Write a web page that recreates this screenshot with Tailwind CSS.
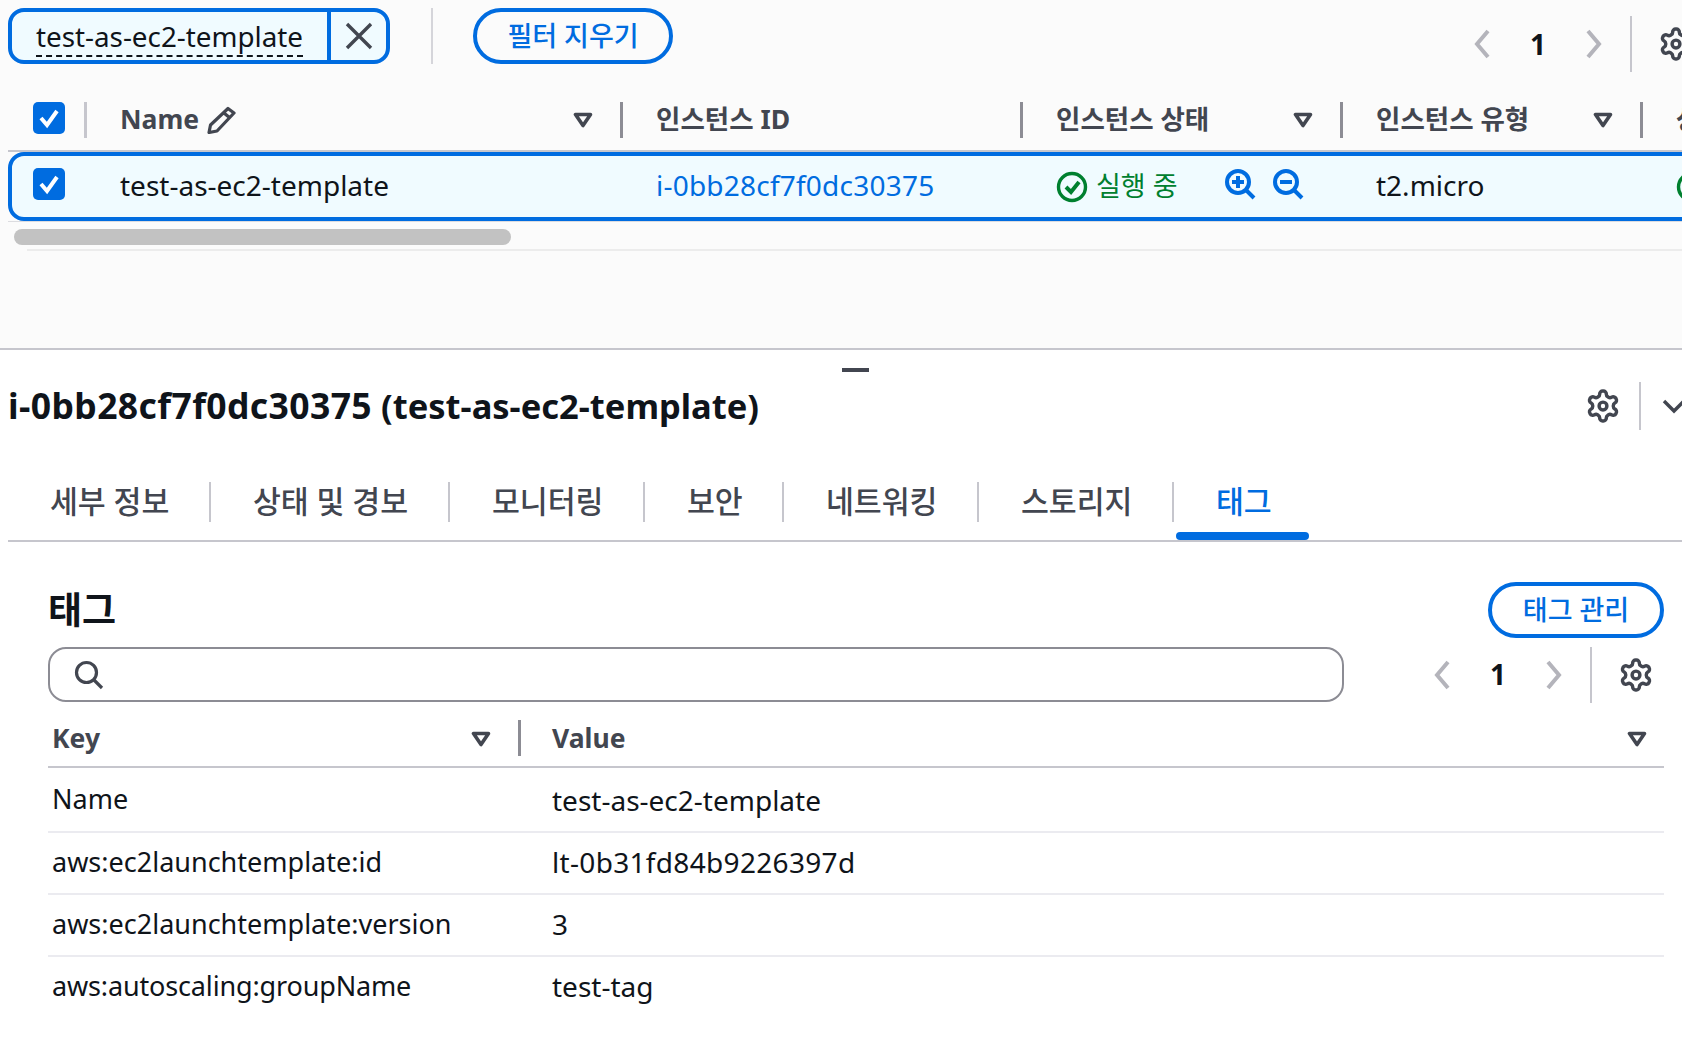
<!DOCTYPE html>
<html lang="ko">
<head>
  <meta charset="UTF-8" />
  <title>EC2 인스턴스</title>
  <script src="https://cdn.jsdelivr.net/npm/@tailwindcss/browser@4"></script>
</head>
<body class="bg-white w-[1682px] h-[1042px] overflow-hidden font-['Noto_Sans','Noto_Sans_CJK_KR',sans-serif] text-[28px] text-[#0f141a]">

  <!-- shared icons -->
  <svg class="hidden">
    <symbol id="gear" viewBox="0 0 24 24"><path fill="none" stroke="currentColor" stroke-width="2.3" stroke-linejoin="round" d="M12.22 2h-.44a2 2 0 0 0-2 2v.18a2 2 0 0 1-1 1.73l-.43.25a2 2 0 0 1-2 0l-.15-.08a2 2 0 0 0-2.73.73l-.22.38a2 2 0 0 0 .73 2.73l.15.1a2 2 0 0 1 1 1.72v.51a2 2 0 0 1-1 1.74l-.15.09a2 2 0 0 0-.73 2.73l.22.38a2 2 0 0 0 2.73.73l.15-.08a2 2 0 0 1 2 0l.43.25a2 2 0 0 1 1 1.73V20a2 2 0 0 0 2 2h.44a2 2 0 0 0 2-2v-.18a2 2 0 0 1 1-1.73l.43-.25a2 2 0 0 1 2 0l.15.08a2 2 0 0 0 2.73-.73l.22-.39a2 2 0 0 0-.73-2.73l-.15-.08a2 2 0 0 1-1-1.74v-.5a2 2 0 0 1 1-1.74l.15-.09a2 2 0 0 0 .73-2.73l-.22-.38a2 2 0 0 0-2.73-.73l-.15.08a2 2 0 0 1-2 0l-.43-.25a2 2 0 0 1-1-1.73V4a2 2 0 0 0-2-2z"/><circle cx="12" cy="12" r="2.6" fill="none" stroke="currentColor" stroke-width="2.3"/></symbol>
    <symbol id="caret" viewBox="0 0 20 16"><path fill="none" stroke="currentColor" stroke-width="3.6" stroke-linejoin="round" d="M2.5 2.5h15L10 13.5z"/></symbol>
    <symbol id="prev" viewBox="0 0 16 30"><path fill="none" stroke="currentColor" stroke-width="4" stroke-linejoin="miter" d="M14 2 3 15l11 13"/></symbol>
    <symbol id="next" viewBox="0 0 16 30"><path fill="none" stroke="currentColor" stroke-width="4" stroke-linejoin="miter" d="m2 2 11 13L2 28"/></symbol>
    <symbol id="check" viewBox="0 0 32 32"><rect width="32" height="32" rx="5" fill="#006ce0"/><path fill="none" stroke="#fff" stroke-width="4" d="m8 16 6 7 10-14"/></symbol>
  </svg>

  <!-- 인스턴스 목록 -->
  <section class="h-[350px] bg-[#fbfbfb] border-b-2 border-[#c6c6cd] overflow-hidden pt-2">
    <div class="flex items-start h-[55px] pl-2">
      <div class="flex w-[382px] h-[56px] border-4 border-[#006ce0] rounded-2xl bg-[#f0fbff] overflow-hidden">
        <div class="w-[315px] pl-[24px] pt-[3px]">
          <span class="inline-block text-[27.8px] leading-[37px] border-b-2 border-dashed border-[#0f141a]">test-as-ec2-template</span>
        </div>
        <div class="flex-1 border-l-4 border-[#006ce0] flex items-center justify-center">
          <svg class="w-[28px] h-[28px] text-[#424650]" viewBox="0 0 28 28"><path fill="none" stroke="currentColor" stroke-width="3.4" d="m2 2 24 24M26 2 2 26"/></svg>
        </div>
      </div>
      <div class="ml-[41px] w-0.5 h-[56px] bg-[#d5d5da]"></div>
      <button class="ml-[40px] w-[200px] h-[56px] border-4 border-[#006ce0] rounded-full text-[27px] text-[#006ce0] font-medium">필터 지우기</button>
      <div class="ml-auto -mr-[12px] flex items-center h-[56px] mt-2 text-[#b4b4bb]">
        <svg class="w-4 h-[30px]"><use href="#prev"/></svg>
        <span class="ml-[40px] w-[29px] font-bold text-[#0f141a]">1</span>
        <svg class="ml-[27px] w-4 h-[30px]"><use href="#next"/></svg>
        <div class="ml-[28px] w-0.5 h-[56px] bg-[#c6c6cd]"></div>
        <svg class="ml-[26px] w-9 h-9 text-[#424650]"><use href="#gear"/></svg>
      </div>
    </div>

    <!-- 헤더 -->
    <div class="ml-2 mt-[39px] w-[1800px] pb-3 border-b-2 border-[#c6c6cd] grid grid-cols-[76px_536px_400px_320px_300px_168px] h-[50px] text-[26.5px] font-bold text-[#424650]">
      <div class="flex items-start h-[36px]">
        <svg class="ml-[25px] w-8 h-8"><use href="#check"/></svg>
      </div>
      <div class="flex items-center h-[36px] border-l-[3px] border-[#c6c6cd] pl-[33px] pr-[27px]">
        <span>Name</span>
        <svg class="ml-[7px] w-[30px] h-7" viewBox="0 0 30 28"><path fill="none" stroke="currentColor" stroke-width="3.2" stroke-linejoin="round" d="M22 2.5 28 7 11 25l-8 1.500L4.500 19zM18 7l6 5"/></svg>
        <svg class="ml-auto w-5 h-4"><use href="#caret"/></svg>
      </div>
      <div class="flex items-center h-[36px] border-l-[3px] border-[#8c8c94] pl-[33px]">인스턴스 ID</div>
      <div class="flex items-center h-[36px] border-l-[3px] border-[#8c8c94] pl-[33px] pr-[27px]">
        <span>인스턴스 상태</span>
        <svg class="ml-auto w-5 h-4"><use href="#caret"/></svg>
      </div>
      <div class="flex items-center h-[36px] border-l-[3px] border-[#8c8c94] pl-[33px] pr-[27px]">
        <span>인스턴스 유형</span>
        <svg class="ml-auto w-5 h-4"><use href="#caret"/></svg>
      </div>
      <div class="flex items-center h-[36px] border-l-[3px] border-[#8c8c94] pl-[33px]">상태 검사</div>
    </div>

    <!-- 선택된 행 -->
    <div class="ml-2 w-[1800px] h-[69px] border-4 border-[#006ce0] rounded-2xl bg-[#f0fbff] grid grid-cols-[72px_536px_400px_320px_300px_168px] items-center">
      <svg class="ml-[21px] -mt-[5px] w-8 h-8"><use href="#check"/></svg>
      <div class="pl-[36px] pb-1">test-as-ec2-template</div>
      <div class="pl-[36px] pb-1 text-[#006ce0] tracking-[0.22px]">i-0bb28cf7f0dc30375</div>
      <div class="pl-[36px] flex items-center text-[#00802f]">
        <svg class="w-8 h-8" viewBox="0 0 32 32"><circle cx="16" cy="16" r="13.5" fill="none" stroke="currentColor" stroke-width="3.4"/><path fill="none" stroke="currentColor" stroke-width="4" d="m10 16 5 5 8-10"/></svg>
        <span class="ml-2 w-[128px] text-[27px]">실행 중</span>
        <svg class="w-8 h-8 -mt-1.5 text-[#006ce0]" viewBox="0 0 32 32"><circle cx="14" cy="14" r="11" fill="none" stroke="currentColor" stroke-width="4"/><path fill="none" stroke="currentColor" stroke-width="4" d="m22 22 8 8M8 14h12M14 8v12"/></svg>
        <svg class="ml-4 w-8 h-8 -mt-1.5 text-[#006ce0]" viewBox="0 0 32 32"><circle cx="14" cy="14" r="11" fill="none" stroke="currentColor" stroke-width="4"/><path fill="none" stroke="currentColor" stroke-width="4" d="m22 22 8 8M8 14h12"/></svg>
      </div>
      <div class="pl-[36px] pb-1">t2.micro</div>
      <div class="pl-[36px] text-[#00802f]">
        <svg class="w-8 h-8" viewBox="0 0 32 32"><circle cx="16" cy="16" r="13.5" fill="none" stroke="currentColor" stroke-width="3.4"/></svg>
      </div>
    </div>
    <div class="ml-2 h-px bg-[#dcdce0]"></div>

    <!-- 가로 스크롤바 -->
    <div class="ml-[14px] mt-[7px] w-[497px] h-4 rounded-full bg-[#c2c2c2]"></div>
    <div class="ml-[27px] mt-1 h-0.5 bg-[#ececec]"></div>
  </section>

  <!-- 세부 패널 -->
  <section>
    <div class="ml-[842px] mt-[18px] w-[27px] h-1 bg-[#424650]"></div>
    <div class="mt-[10px] h-[48px] pl-2 flex items-center">
      <h1 class="text-[34.5px] font-bold"><span class="text-[35.5px] tracking-[0.4px]">i-0bb28cf7f0dc30375</span> (test-as-ec2-template)</h1>
      <svg class="ml-auto w-9 h-9 text-[#424650]"><use href="#gear"/></svg>
      <div class="ml-[18px] w-0.5 h-[48px] bg-[#c6c6cd]"></div>
      <svg class="ml-[21px] -mr-[4px] w-6 h-4 text-[#424650]" viewBox="0 0 24 16"><path fill="none" stroke="currentColor" stroke-width="3.4" d="m2 3 10 10L22 3"/></svg>
    </div>

    <!-- 탭 -->
    <div class="mt-[52px] ml-2 h-[60px] flex items-start border-b-2 border-[#c6c6cd] text-[30.3px] font-medium text-[#424650]">
      <div class="w-[203px] h-10 pl-[42px] border-r-2 border-[#c6c6cd] flex items-center">세부 정보</div>
      <div class="w-[239px] h-10 pl-[42px] border-r-2 border-[#c6c6cd] flex items-center">상태 및 경보</div>
      <div class="w-[195px] h-10 pl-[42px] border-r-2 border-[#c6c6cd] flex items-center">모니터링</div>
      <div class="w-[139px] h-10 pl-[42px] border-r-2 border-[#c6c6cd] flex items-center">보안</div>
      <div class="w-[195px] h-10 pl-[42px] border-r-2 border-[#c6c6cd] flex items-center">네트워킹</div>
      <div class="w-[195px] h-10 pl-[42px] border-r-2 border-[#c6c6cd] flex items-center">스토리지</div>
      <div class="relative w-[136px] h-10 pl-[42px] flex items-center text-[#006ce0]">
        태그
        <div class="absolute left-[2px] top-[50px] w-[133px] h-2 rounded-full bg-[#006ce0]"></div>
      </div>
    </div>

    <!-- 태그 -->
    <div class="pl-[48px] pr-[18px]">
      <div class="mt-[40px] flex items-center justify-between h-[56px]">
        <h2 class="text-[37px] font-bold">태그</h2>
        <button class="w-[176px] h-[56px] border-4 border-[#006ce0] rounded-full text-[27px] text-[#006ce0] font-medium">태그 관리</button>
      </div>

      <div class="mt-[9px] flex items-center h-[55px]">
        <div class="w-[1296px] h-[55px] border-2 border-[#8c8c94] rounded-[18px] flex items-center pl-[24px] text-[#424650]">
          <svg class="w-[30px] h-[30px]" viewBox="0 0 30 30"><circle cx="12.5" cy="12.5" r="10" fill="none" stroke="currentColor" stroke-width="3.2"/><path fill="none" stroke="currentColor" stroke-width="3.2" d="m20 20 8 8"/></svg>
        </div>
        <div class="ml-[90px] flex items-center text-[#b4b4bb]">
          <svg class="w-4 h-[30px]"><use href="#prev"/></svg>
          <span class="ml-[40px] w-[56px] font-bold text-[#0f141a] pb-0.5">1</span>
          <svg class="w-4 h-[30px]"><use href="#next"/></svg>
          <div class="ml-[28px] w-0.5 h-[56px] bg-[#c6c6cd]"></div>
          <svg class="ml-[26px] w-9 h-9 text-[#424650]"><use href="#gear"/></svg>
        </div>
      </div>

      <div class="mt-[18px] h-[48px] pb-[11px] border-b-2 border-[#c6c6cd] flex text-[26.5px] font-bold text-[#424650]">
        <div class="w-[470px] h-9 pl-[4px] pr-[27px] pt-px flex items-center">
          <span>Key</span>
          <svg class="ml-auto w-5 h-4"><use href="#caret"/></svg>
        </div>
        <div class="flex-1 h-9 border-l-[3px] border-[#8c8c94] pl-[31px] pr-[17px] pt-px flex items-center">
          <span>Value</span>
          <svg class="ml-auto w-5 h-4"><use href="#caret"/></svg>
        </div>
      </div>

      <div class="h-[65px] grid grid-cols-[504px_1fr] items-center border-b-2 border-[#ebebf0]">
        <div class="pl-[4px] text-[27px]">Name</div><div>test-as-ec2-template</div>
      </div>
      <div class="h-[62px] pb-0.5 grid grid-cols-[504px_1fr] items-center border-b-2 border-[#ebebf0]">
        <div class="pl-[4px] text-[27px]">aws:ec2launchtemplate:id</div><div class="tracking-[0.32px]">lt-0b31fd84b9226397d</div>
      </div>
      <div class="h-[62px] pb-0.5 grid grid-cols-[504px_1fr] items-center border-b-2 border-[#ebebf0]">
        <div class="pl-[4px] text-[27px]">aws:ec2launchtemplate:version</div><div>3</div>
      </div>
      <div class="h-[60px] pb-0.5 grid grid-cols-[504px_1fr] items-center">
        <div class="pl-[4px] text-[27px] tracking-[-0.15px]">aws:autoscaling:groupName</div><div>test-tag</div>
      </div>
    </div>
  </section>
</body>
</html>
